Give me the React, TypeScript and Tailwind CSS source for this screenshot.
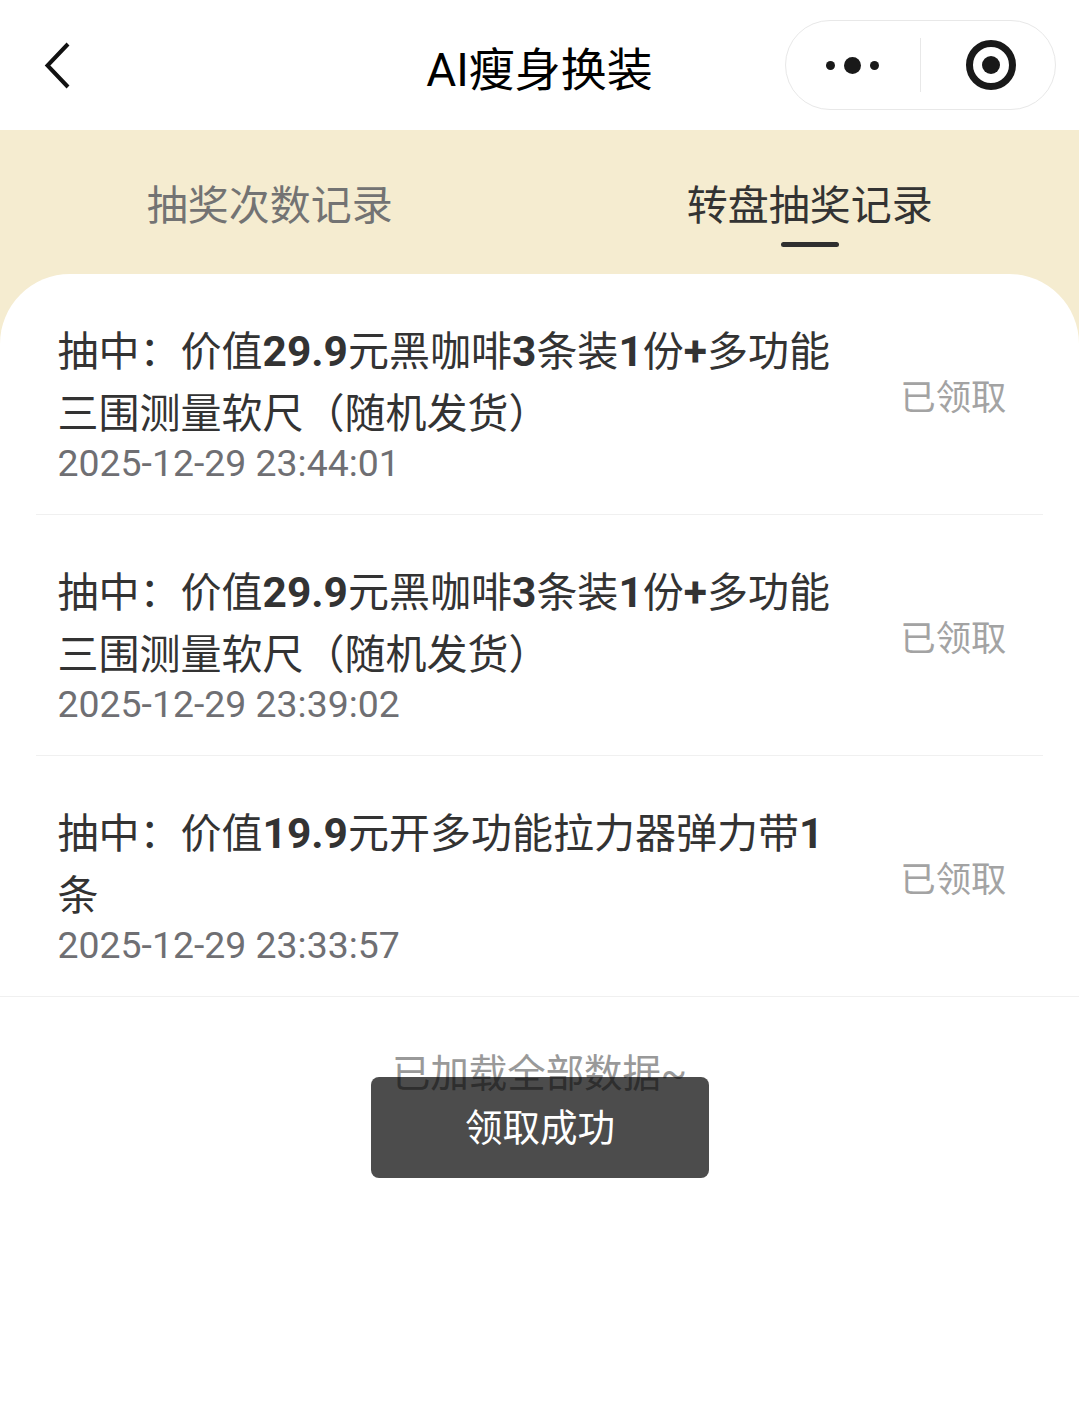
const FONT = "font-['Roboto','Noto_Sans_CJK_SC',sans-serif]";

type Part = { text: string; bold?: boolean };

const records: { parts: Part[]; time: string; full?: boolean }[] = [
  {
    parts: [
      { text: "抽中：价值" },
      { text: "29.9", bold: true },
      { text: "元黑咖啡" },
      { text: "3", bold: true },
      { text: "条装" },
      { text: "1", bold: true },
      { text: "份" },
      { text: "+", bold: true },
      { text: "多功能三围测量软尺（随机发货）" },
    ],
    time: "2025-12-29 23:44:01",
  },
  {
    parts: [
      { text: "抽中：价值" },
      { text: "29.9", bold: true },
      { text: "元黑咖啡" },
      { text: "3", bold: true },
      { text: "条装" },
      { text: "1", bold: true },
      { text: "份" },
      { text: "+", bold: true },
      { text: "多功能三围测量软尺（随机发货）" },
    ],
    time: "2025-12-29 23:39:02",
  },
  {
    parts: [
      { text: "抽中：价值" },
      { text: "19.9", bold: true },
      { text: "元开多功能拉力器弹力带" },
      { text: "1", bold: true },
      { text: "条" },
    ],
    time: "2025-12-29 23:33:57",
    full: true,
  },
];

const RecordRow = ({ parts, time }: { parts: Part[]; time: string }) => (
  <div className="flex h-[240px] items-center justify-between pl-[21.5px] pr-[36.5px]">
    <div className="w-[780px] pt-[13px]">
      <p className="text-[41px] leading-[62px] text-[#333333]">
        {parts.map((part, i) =>
          part.bold ? (
            <span key={i} className="text-[42.5px] font-bold">
              {part.text}
            </span>
          ) : (
            <span key={i}>{part.text}</span>
          ),
        )}
      </p>
      <p className="text-[37.4px] leading-[36px] text-[#6f6f73]">{time}</p>
    </div>
    <span className="pt-[9px] text-[35.4px] text-[#a3a3a3]">已领取</span>
  </div>
);

export default function App() {
  return (
    <div className={`relative min-h-[1410px] bg-white ${FONT}`}>
      <header className="relative flex h-[130px] items-center justify-center bg-white">
        <svg className="absolute left-[40px] top-[40px]" width="36" height="50" viewBox="0 0 36 50" fill="none">
          <path d="M28 4 L7.5 25.5 L28 47" stroke="#111" strokeWidth="4" />
        </svg>
        <h1 className="mt-[11px] text-[46px] text-black">AI瘦身换装</h1>
        <div className="absolute left-[785px] top-[20px] flex h-[90px] w-[271px] items-center rounded-full border border-[#e8e8e8] bg-white">
          <div className="flex w-[134px] items-center justify-center gap-[9px] pr-[1px]">
            <span className="h-[9px] w-[9px] rounded-full bg-[#191919]" />
            <span className="h-[17px] w-[17px] rounded-full bg-[#191919]" />
            <span className="h-[9px] w-[9px] rounded-full bg-[#191919]" />
          </div>
          <div className="h-[54px] w-px bg-[#e8e8e8]" />
          <div className="flex flex-1 items-center justify-center pl-[5px]">
            <div className="flex h-[50px] w-[50px] items-center justify-center rounded-full border-[7px] border-[#191919]">
              <span className="h-[18px] w-[18px] rounded-full bg-[#191919]" />
            </div>
          </div>
        </div>
      </header>

      <div className="bg-[#f5ecd0]">
        <div className="flex h-[144px]">
          <div className="flex w-1/2 justify-center pt-[47px] text-[41px] leading-[58px] text-[#737373]">
            抽奖次数记录
          </div>
          <div className="flex w-1/2 flex-col items-center pl-[1px] pt-[47px] text-[41px] leading-[58px] text-[#333333]">
            转盘抽奖记录
            <span className="mt-[7px] h-[5px] w-[58px] rounded-full bg-[#2f2f2f]" />
          </div>
        </div>

        <div className="rounded-t-[70px] bg-white">
          {records.map((record) => (
            <div key={record.time} className={record.full ? "" : "px-[36px]"}>
              <div className={`border-b border-[#f0f0f0] ${record.full ? "px-[36px]" : ""}`}>
                <RecordRow parts={record.parts} time={record.time} />
              </div>
            </div>
          ))}
        </div>
      </div>

      <p className="bg-white pt-[52px] text-center text-[38.4px] leading-[50px] text-[#999999]">已加载全部数据~</p>

      <div className="absolute left-[371px] top-[1077px] flex h-[101px] w-[338px] items-center justify-center rounded-[8px] bg-black/70 pt-[1px] text-[37.5px] text-white">
        领取成功
      </div>
    </div>
  );
}
